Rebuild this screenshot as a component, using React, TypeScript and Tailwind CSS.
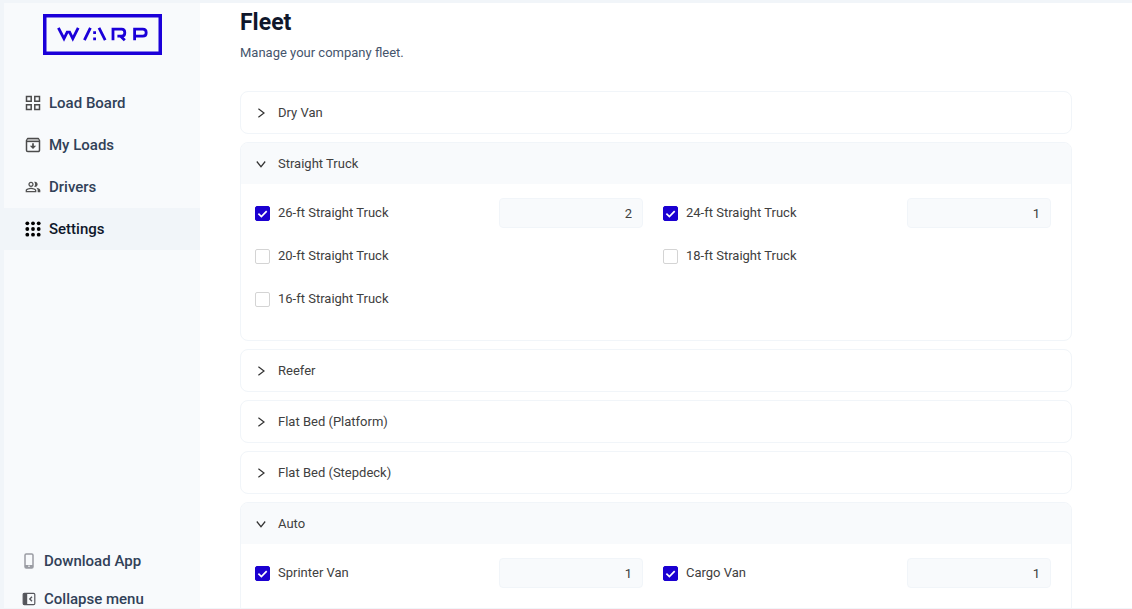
import { useState } from "react";
import type { ReactNode } from "react";
import { MdOutlinePeopleAlt } from "react-icons/md";

type Vehicle = { name: string; count?: number };
type Category = { name: string; open?: boolean; vehicles: Vehicle[] };

const categories: Category[] = [
  { name: "Dry Van", vehicles: [] },
  {
    name: "Straight Truck",
    open: true,
    vehicles: [
      { name: "26-ft Straight Truck", count: 2 },
      { name: "24-ft Straight Truck", count: 1 },
      { name: "20-ft Straight Truck" },
      { name: "18-ft Straight Truck" },
      { name: "16-ft Straight Truck" },
    ],
  },
  { name: "Reefer", vehicles: [] },
  { name: "Flat Bed (Platform)", vehicles: [] },
  { name: "Flat Bed (Stepdeck)", vehicles: [] },
  {
    name: "Auto",
    open: true,
    vehicles: [
      { name: "Sprinter Van", count: 1 },
      { name: "Cargo Van", count: 1 },
    ],
  },
];

function Logo() {
  return (
    <svg viewBox="0 0 119 41" className="h-[41px] w-[119px]" role="img" aria-label="Warp">
      <rect x="1.75" y="1.75" width="115.5" height="37.5" fill="none" stroke="#1b00d9" strokeWidth="3.5" />
      <g fill="none" stroke="#1b00d9" strokeWidth="2.8">
        <path d="M15.4 13.8L21 24.6L24.2 18.2H26.6L29.8 24.6L35.2 13.8" />
        <path d="M47.4 13.8L41.4 26.2M56 13.8L62.2 26.2" />
        <path d="M70 26.2V15.2H78.6C81 15.2 81.8 16.4 81.8 18.7C81.8 21 81 22.2 78.6 22.2H74.4M77.6 22.2L81.8 26.2" />
        <path d="M91.6 26.2V15.2H99.8C102.4 15.2 103.2 16.4 103.2 18.7C103.2 21 102.4 22.2 99.8 22.2H91.6" />
      </g>
      <path d="M50.2 17.2h2.8v2.8h-2.8zM50.2 23.4h2.8v2.8h-2.8z" fill="#1b00d9" />
    </svg>
  );
}

function BoardIcon() {
  return (
    <svg viewBox="0 0 16 16" className="size-4" fill="none" stroke="#4b4b4b" strokeWidth="1.5" aria-hidden="true">
      <path d="M1.5 1.5h4.7v4.7H1.5zM9.8 1.5h4.7v4.7H9.8zM1.5 9.8h4.7v4.7H1.5zM9.8 9.8h4.7v4.7H9.8z" />
    </svg>
  );
}

function LoadsIcon() {
  return (
    <svg viewBox="0 0 16 16" className="size-4" fill="none" stroke="#4b4b4b" strokeWidth="1.5" aria-hidden="true">
      <path d="M1.5 3.6L2.8 1.5h10.4l1.3 2.1v9.6a1.3 1.3 0 0 1-1.3 1.3H2.8a1.3 1.3 0 0 1-1.3-1.3z" strokeLinejoin="round" />
      <path d="M1.5 4.4h13" />
      <path d="M2.2 3h11.6" stroke="#a3a3a3" strokeWidth="1.2" />
      <path d="M8 6.2v3.6" strokeWidth="1.7" />
      <path d="M4.8 8.8h6.4L8 12z" fill="#4b4b4b" stroke="none" />
    </svg>
  );
}

function DotsIcon() {
  return (
    <svg viewBox="0 0 16 16" className="size-4" fill="#000" aria-hidden="true">
      {[2.3, 8, 13.7].map((y) => [2.3, 8, 13.7].map((x) => <circle key={`${x}-${y}`} cx={x} cy={y} r="1.9" />))}
    </svg>
  );
}

function PhoneIcon() {
  return (
    <svg viewBox="0 0 10 16" className="h-4 w-2.5" aria-hidden="true">
      <rect x="1" y="1" width="8" height="14" rx="1.2" fill="none" stroke="#9a9ca3" strokeWidth="1.5" />
      <path d="M1 12h8v3H1z" fill="#9a9ca3" />
      <circle cx="5" cy="13.3" r="0.8" fill="#fff" />
    </svg>
  );
}

function CollapseIcon() {
  return (
    <svg viewBox="0 0 14 14" className="size-3.5" aria-hidden="true">
      <rect x="1.2" y="1.4" width="11.6" height="11.2" rx="1.2" fill="none" stroke="#55565c" strokeWidth="1.2" />
      <path d="M1.2 1.4h4v11.2h-4z" fill="#55565c" />
      <path d="M10 4.8L7.8 7L10 9.2" fill="none" stroke="#55565c" strokeWidth="1.4" />
    </svg>
  );
}

function NavItem({ icon, label, active }: { icon: ReactNode; label: string; active?: boolean }) {
  return (
    <li>
      <a
        href="#"
        aria-current={active ? "page" : undefined}
        className={
          active
            ? "flex h-[42px] items-center gap-2 bg-slate-100 pl-[21px] text-slate-900"
            : "flex h-[42px] items-center gap-2 pl-[21px] text-slate-700"
        }
      >
        {icon}
        {label}
      </a>
    </li>
  );
}

function VehicleRow({ vehicle }: { vehicle: Vehicle }) {
  const [checked, setChecked] = useState(vehicle.count !== undefined);
  const [count, setCount] = useState(String(vehicle.count ?? 1));
  return (
    <div className="flex h-[30px] items-center justify-between pr-5">
      <label className="flex items-center gap-2 leading-5">
        <span className="grid size-[15px] place-items-center">
          <input
            type="checkbox"
            checked={checked}
            onChange={(e) => setChecked(e.target.checked)}
            className="peer col-start-1 row-start-1 size-[15px] appearance-none rounded-xs border border-neutral-300 bg-white checked:border-[#1b00d1] checked:bg-[#1b00d1]"
          />
          <svg
            viewBox="0 0 15 15"
            className="pointer-events-none invisible col-start-1 row-start-1 size-[15px] peer-checked:visible"
            fill="none"
            stroke="#fff"
            strokeWidth="1.7"
            aria-hidden="true"
          >
            <path d="M3.4 7.6L6.4 10.5L11.7 5.2" />
          </svg>
        </span>
        {vehicle.name}
      </label>
      {checked && (
        <input
          type="text"
          inputMode="numeric"
          aria-label={`${vehicle.name} count`}
          value={count}
          onChange={(e) => setCount(e.target.value)}
          className="h-[30px] w-36 rounded-sm border border-slate-100 bg-slate-50 px-2.5 text-right"
        />
      )}
    </div>
  );
}

function CategoryCard({ category }: { category: Category }) {
  const [open, setOpen] = useState(Boolean(category.open));
  return (
    <section className="overflow-hidden rounded-lg border border-slate-100">
      <h2>
        <button
          type="button"
          aria-expanded={open}
          onClick={() => setOpen(!open)}
          className={
            open
              ? "flex h-[41px] w-full items-center gap-[11px] bg-slate-50 pl-3.5 text-left"
              : "flex h-[41px] w-full items-center gap-[11px] pl-3.5 text-left"
          }
        >
          <svg viewBox="0 0 12 12" className="size-3" fill="none" stroke="#333" strokeWidth="1.2" aria-hidden="true">
            {open ? <path d="M1.8 3.5L6 8.7L10.2 3.5" /> : <path d="M3.4 1.8L9 6L3.4 10.2" />}
          </svg>
          {category.name}
        </button>
      </h2>
      {open && (
        <div className="grid grid-cols-2 gap-y-[13px] pt-3.5 pb-[26px] pl-3.5">
          {category.vehicles.map((v) => (
            <VehicleRow key={v.name} vehicle={v} />
          ))}
        </div>
      )}
    </section>
  );
}

export default function App() {
  return (
    <div className="flex h-screen overflow-hidden border-t-[3px] border-b border-l-4 border-slate-100 bg-white font-['Roboto',sans-serif] text-[13px] text-neutral-700">
      <aside className="flex w-49 shrink-0 flex-col bg-slate-50 pt-[11px] text-[15px] font-medium">
        <div className="flex justify-center">
          <Logo />
        </div>
        <nav className="mt-[27px]">
          <ul>
            <NavItem icon={<BoardIcon />} label="Load Board" />
            <NavItem icon={<LoadsIcon />} label="My Loads" />
            <NavItem icon={<MdOutlinePeopleAlt className="size-4 text-neutral-600" />} label="Drivers" />
            <NavItem icon={<DotsIcon />} label="Settings" active />
          </ul>
        </nav>
        <div className="mt-auto flex flex-col gap-5 pl-[18px] leading-[18px] text-slate-700">
          <a href="#" className="flex items-center gap-2">
            <span className="flex w-3.5 justify-center">
              <PhoneIcon />
            </span>
            Download App
          </a>
          <button type="button" className="flex items-center gap-2">
            <CollapseIcon />
            Collapse menu
          </button>
        </div>
      </aside>
      <main className="min-w-0 flex-1 overflow-hidden pt-1 pr-[60px] pl-10">
        <h1 className="text-[23px] leading-8 font-bold text-slate-900">Fleet</h1>
        <p className="mt-1 leading-5 text-slate-600">Manage your company fleet.</p>
        <div className="mt-7 flex flex-col gap-2">
          {categories.map((c) => (
            <CategoryCard key={c.name} category={c} />
          ))}
        </div>
      </main>
    </div>
  );
}
